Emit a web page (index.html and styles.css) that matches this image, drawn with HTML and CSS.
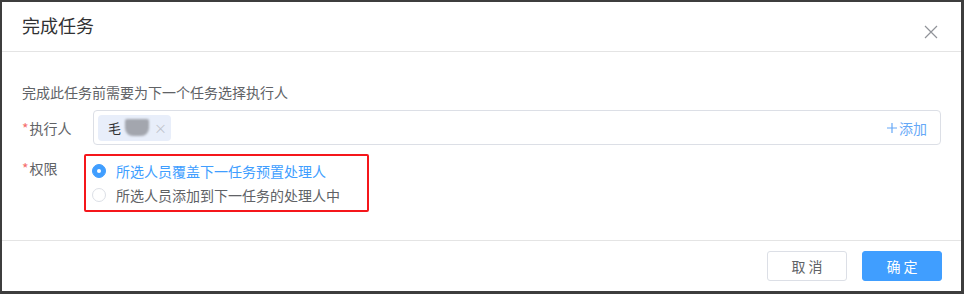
FILE: index.html
```html
<!DOCTYPE html>
<html lang="zh">
<head>
<meta charset="utf-8">
<link rel="stylesheet" href="styles.css">
</head>
<body>
<div class="dialog">
  <div class="header">
    <span class="title">完成任务</span>
    <svg class="close" width="14" height="14" viewBox="0 0 14 14"><path d="M1 1L13 13M13 1L1 13" stroke="#909399" stroke-width="1.2" fill="none"/></svg>
  </div>
  <div class="body">
    <div class="intro">完成此任务前需要为下一个任务选择执行人</div>
    <div class="row row-center">
      <div class="label"><span class="req">*</span>执行人</div>
      <div class="input">
        <span class="tag"><span class="tag-text">毛</span><span class="blur"></span><span class="tag-x">×</span></span>
        <span class="add"><svg class="plus" width="10" height="10" viewBox="0 0 10 10"><path d="M5 0V10M0 5H10" stroke="#66a8f7" stroke-width="1.2" fill="none"/></svg>添加</span>
      </div>
    </div>
    <div class="row">
      <div class="label label-top"><span class="req">*</span>权限</div>
      <div class="radios">
        <div class="radio checked"><span class="dot"></span><span class="rtext">所选人员覆盖下一任务预置处理人</span></div>
        <div class="radio"><span class="dot"></span><span class="rtext">所选人员添加到下一任务的处理人中</span></div>
      </div>
    </div>
  </div>
  <div class="footer">
    <button class="btn">取 消</button>
    <button class="btn primary">确 定</button>
  </div>
</div>
</body>
</html>
```

FILE: styles.css
```css
html, body {
  margin: 0;
  padding: 0;
}
body {
  width: 964px;
  height: 294px;
  background: #3d3d3d;
  font-family: "Noto Sans CJK SC", "Noto Sans", sans-serif;
  overflow: hidden;
}
.dialog {
  margin: 2px 0 0 2px;
  width: 959px;
  height: 289px;
  background: #fff;
  display: flex;
  flex-direction: column;
  box-sizing: border-box;
}
.header {
  height: 50px;
  flex: none;
  box-sizing: border-box;
  padding: 11px 23px 0 20px;
  border-bottom: 1px solid #e4e4e4;
  display: flex;
  justify-content: space-between;
  align-items: flex-start;
}
.title {
  font-size: 18px;
  line-height: 24px;
  color: #303133;
}
.close {
  margin-top: 12px;
}
.body {
  padding: 30px 20px 0 20px;
  height: 189px;
  flex: none;
  box-sizing: border-box;
  border-bottom: 1px solid #e4e4e4;
}
.intro {
  font-size: 14px;
  line-height: 20px;
  color: #606266;
  margin-bottom: 8px;
}
.row {
  display: flex;
  align-items: flex-start;
}
.row-center {
  align-items: center;
  margin-bottom: 9px;
}
.label {
  width: 71px;
  flex: none;
  font-size: 14px;
  line-height: 20px;
  color: #606266;
}
.label-top {
  padding-top: 4px;
}
.req {
  color: #f56c6c;
  margin-right: 1px;
}
.input {
  flex: 1;
  height: 35px;
  box-sizing: border-box;
  border: 1px solid #dcdfe6;
  border-radius: 4px;
  padding: 0 13px 0 4px;
  display: flex;
  align-items: center;
  justify-content: space-between;
}
.tag {
  height: 26px;
  width: 73px;
  box-sizing: border-box;
  background: #e8eefa;
  border-radius: 4px;
  display: flex;
  align-items: center;
  padding-left: 10px;
  font-size: 13px;
  color: #303133;
}
.tag-text {
  line-height: 18px;
}
.blur {
  width: 24px;
  height: 17px;
  margin-left: 4px;
  background: #a3a6ae;
  border-radius: 2px 2px 8px 8px;
  filter: blur(1px);
}
.tag-x {
  margin-left: 5px;
  color: #c0c4cc;
  font-size: 13px;
  line-height: 14px;
}
.add {
  font-size: 14px;
  color: #66a8f7;
  line-height: 20px;
  display: flex;
  align-items: center;
}
.plus {
  margin-right: 2px;
}
.radios {
  margin-left: -9px;
  width: 285px;
  box-sizing: border-box;
  border: 2px solid #f5161b;
  border-radius: 2px;
  padding: 3px 0 3px 6px;
}
.radio {
  height: 24px;
  display: flex;
  align-items: center;
  font-size: 14px;
  color: #606266;
}
.dot {
  width: 14px;
  height: 14px;
  box-sizing: border-box;
  border: 1px solid #dcdfe6;
  border-radius: 50%;
  background: #fff;
  margin-right: 10px;
  position: relative;
}
.checked {
  color: #409eff;
}
.checked .dot {
  background: #409eff;
  border-color: #409eff;
}
.checked .dot::after {
  content: "";
  position: absolute;
  left: 4px;
  top: 4px;
  width: 4px;
  height: 4px;
  border-radius: 50%;
  background: #fff;
}
.rtext {
  line-height: 20px;
}
.footer {
  flex: 1;
  display: flex;
  justify-content: flex-end;
  align-items: flex-start;
  padding: 10px 19px 0 0;
  gap: 15px;
}
.btn {
  width: 80px;
  height: 30px;
  box-sizing: border-box;
  border: 1px solid #dcdfe6;
  border-radius: 3px;
  background: #fff;
  color: #606266;
  font-family: "Noto Sans CJK SC", "Noto Sans", sans-serif;
  font-size: 14px;
  padding: 0;
}
.primary {
  background: #409eff;
  border-color: #409eff;
  color: #fff;
}
```
